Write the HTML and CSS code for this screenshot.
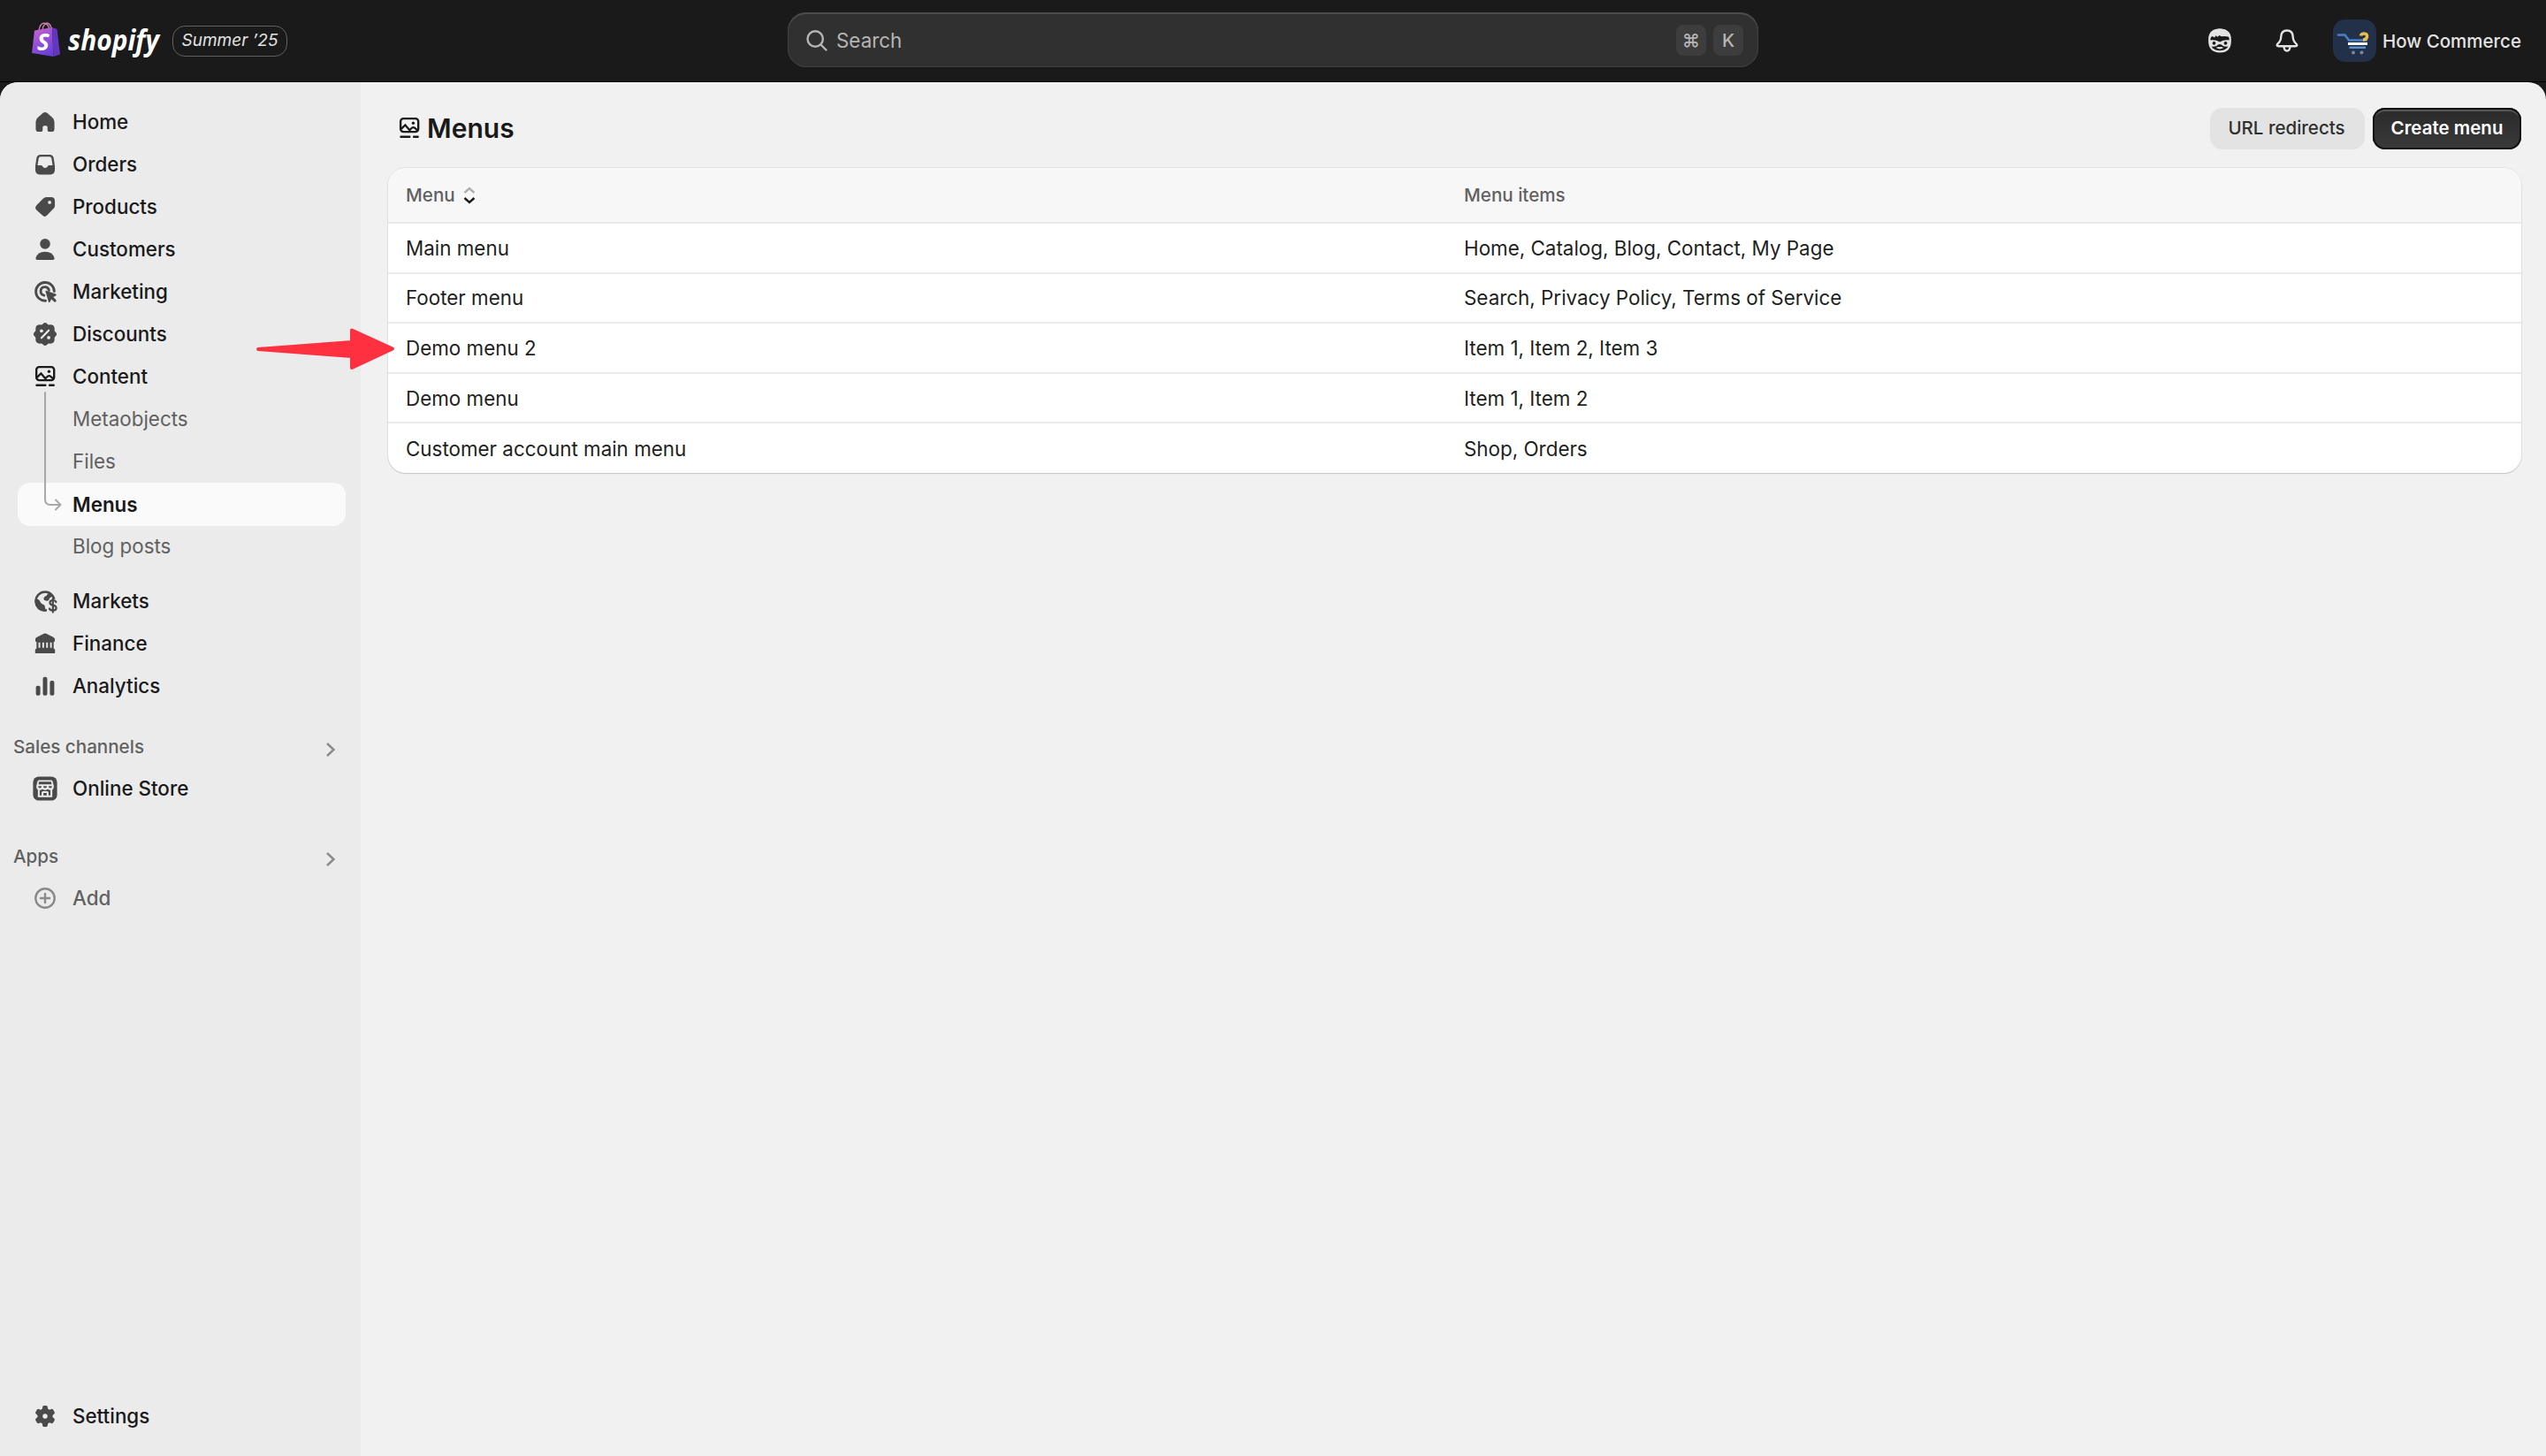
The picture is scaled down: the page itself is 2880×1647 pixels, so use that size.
FILE: index.html
```
<!DOCTYPE html>
<html lang="en">
<head>
    <meta charset="UTF-8">
    <meta name="viewport" content="width=device-width, initial-scale=1.0">
    <title>Menus</title>
    <link rel="stylesheet" href="styles.css">
</head>
<body>

<!-- Content icon is used in the sidebar and in the page title -->
<svg class="hidden" width="0" height="0">
    <symbol id="icon-content" viewBox="0 0 20 20">
        <rect x="4.200" y="3.600" width="11.800" height="8.800" rx="1.900" fill="none" stroke="currentColor" stroke-width="1.400"/>
        <path d="M4.600 10.500 7.300 7.900 10.700 11.900M10.200 11.200 11.900 9.700Q12.900 9.200 13.700 9.900L15.600 11.500" fill="none" stroke="currentColor" stroke-width="1.300"/>
        <circle cx="12.600" cy="6.600" r="1" fill="currentColor"/>
        <path d="M4.400 15.700H10.200M13 15.700H15.700" fill="none" stroke="currentColor" stroke-width="1.400" stroke-linecap="round"/>
    </symbol>
</svg>

<header class="topbar">
    <div class="brand">
        <svg class="logo" width="150" height="46" viewBox="0 0 150 46">
            <defs>
                <linearGradient id="bag" x1="0.200" y1="0" x2="0.600" y2="1">
                    <stop offset="0" stop-color="#c763d0"/>
                    <stop offset="0.500" stop-color="#9550d6"/>
                    <stop offset="1" stop-color="#6a3fd8"/>
                </linearGradient>
            </defs>
            <path d="M9 12C9.500 5 13 2.500 16 3.500S20.500 8 20.500 11M13 11C13.500 5 17 2 19.500 3.500S23 7 23 10" fill="none" stroke="#c77fa8" stroke-width="1.500"/>
            <path d="M4 11.500 24 8 25.500 41 1 37Z" fill="url(#bag)"/>
            <path d="M24 8 29.500 10 33 38.500 25.500 41Z" fill="#6236be"/>
            <text class="logo-s" x="7" y="34">S</text>
            <text class="logo-text" x="42" y="34" textLength="103" lengthAdjust="spacingAndGlyphs">shopify</text>
        </svg>
        <span class="edition">Summer ’25</span>
    </div>
    <div class="search">
        <svg class="search-icon" width="24" height="24" viewBox="0 0 24 24"><circle cx="10.200" cy="10" r="8.700"/><path d="M16.500 16.500 22.500 22.500"/></svg>
        <span class="search-label">Search</span>
        <kbd>⌘</kbd>
        <kbd>K</kbd>
    </div>
    <div class="topbar-right">
        <svg width="28" height="28" viewBox="0 0 28 28">
            <path d="M14 1.500C22.500 1.500 25.800 6 25.800 14S22.500 26.300 14 26.300 2.200 22 2.200 14 5.500 1.500 14 1.500Z" fill="none" stroke="#e3e3e3" stroke-width="2.200"/>
            <path d="M1.500 11C1.500 4 7 .5 14 .5S26.500 4 26.500 11Q22 8 16 9.300L13.500 8 11.500 9.800 9.500 8.200 8 10.500 5.500 9Q4 9.500 3.200 11.500Z" fill="#e3e3e3"/>
            <path d="M2 13.500Q9 12.300 14 15.500Q19 12.300 26 13.500V20Q19 22 15.800 18.500Q14 17.500 12.200 18.500Q9 22 2 20Z" fill="#e3e3e3"/>
            <circle cx="7.500" cy="16.800" r="1.900" fill="#1a1a1a"/>
            <circle cx="20.500" cy="16.800" r="1.900" fill="#1a1a1a"/>
            <path d="M9.800 22Q12.500 20.300 14 21.300Q15.500 20.300 18.200 22Q14 24.800 9.800 22Z" fill="#e3e3e3"/>
        </svg>
        <svg width="28" height="28" viewBox="0 0 28 28" fill="none" stroke="#e3e3e3" stroke-width="2.400" stroke-linejoin="round">
            <path d="M14 2.500C9.500 2.500 7.500 5.500 7.300 9.500C7.100 14 6 15.500 3.800 17.300C2 18.800 2.500 20.300 4.500 20.300H23.500C25.500 20.300 26 18.800 24.200 17.300C22 15.500 20.900 14 20.700 9.500C20.500 5.500 18.500 2.500 14 2.500Z"/>
            <path d="M10.500 21C10.800 24 12 25.500 14 25.500S17.200 24 17.500 21"/>
        </svg>
        <div class="store">
            <svg class="avatar" width="49" height="48" viewBox="0 0 49 48">
                <rect width="49" height="48" rx="14" fill="#22304a"/>
                <path d="M6 17.500H13.500L18 23.500H38" fill="none" stroke="#4a80c4" stroke-width="2.600" stroke-linecap="round"/>
                <path d="M17 27.500H39" stroke="#fff" stroke-width="3"/>
                <path d="M18.500 31.800H37" stroke="#5b93d6" stroke-width="2.400"/>
                <circle cx="23" cy="37.500" r="2" fill="#7b8798"/>
                <circle cx="32.500" cy="37.500" r="2" fill="#7b8798"/>
                <path d="M31.500 18.500Q32 16 35.500 16T38.500 20Q37.500 23 34 23" fill="none" stroke="#e9bd4b" stroke-width="3.600"/>
            </svg>
            <span>How Commerce</span>
        </div>
    </div>
</header>

<div class="frame">
    <aside class="sidebar">
        <nav class="nav">
            <a class="nav-item">
                <svg class="icon" viewBox="0 0 20 20"><path d="M8.600 4Q10 3 11.400 4L15 7.200Q16.200 8.300 16.200 9.800V14.500Q16.200 16.500 14.300 16.500H12.500Q11.600 16.500 11.600 15.500V13.500Q11.600 12.500 10.600 12.500H9.400Q8.400 12.500 8.400 13.500V15.500Q8.400 16.500 7.500 16.500H5.700Q3.800 16.500 3.800 14.500V9.800Q3.800 8.300 5 7.200Z"/></svg>
                Home
            </a>
            <a class="nav-item">
                <svg class="icon" viewBox="0 0 20 20"><path fill-rule="evenodd" d="M7 3.500H13Q15.300 3.500 15.700 5.800L16.500 11V13.700Q16.500 16.700 13.500 16.700H6.500Q3.500 16.700 3.500 13.700V11L4.300 5.800Q4.700 3.500 7 3.500ZM7 4.900Q5.900 4.900 5.700 6L5 10.600H7.300Q8 10.600 8.300 11.300Q8.800 12.300 10 12.300T11.700 11.300Q12 10.600 12.700 10.600H15L14.300 6Q14.100 4.900 13 4.900Z"/></svg>
                Orders
            </a>
            <a class="nav-item">
                <svg class="icon" viewBox="0 0 20 20"><path fill-rule="evenodd" d="M10.800 3.500H14Q16.500 3.500 16.500 6V9.200Q16.500 10.300 15.700 11L11.300 15.600Q9.800 17.200 8.200 15.600L4.400 12.200Q2.800 10.700 4.300 8.900L8.800 4.400Q9.600 3.500 10.800 3.500ZM13 8.100A1.100 1.100 0 1 0 13 5.900 1.100 1.100 0 1 0 13 8.100Z"/></svg>
                Products
            </a>
            <a class="nav-item">
                <svg class="icon" viewBox="0 0 20 20"><circle cx="10" cy="6.400" r="3.400"/><path d="M4.700 17Q3.500 17 3.800 15.800Q5 11.600 10 11.600T16.200 15.800Q16.500 17 15.300 17Z"/></svg>
                Customers
            </a>
            <a class="nav-item">
                <svg class="icon" viewBox="0 0 20 20"><path class="line" d="M10.300 16A6.100 6.100 0 1 1 16.100 9.700M9.300 12.400A2.800 2.800 0 1 1 12.600 9"/><path d="M10.300 9.900Q10 9.200 10.800 9.300L17.100 11.500Q17.900 12 17.200 12.600L15.500 13.500 17.300 15.500Q17.700 16.100 17.200 16.600 16.600 17.100 16.100 16.700L14.200 15 13.200 16.900Q12.700 17.500 12.300 16.800Z"/></svg>
                Marketing
            </a>
            <a class="nav-item">
                <svg class="icon" viewBox="0 0 20 20"><path d="M8.200 3.500Q10 1.100 11.800 3.500Q12.400 3.900 13.300 3.700Q16.400 3.600 16.300 6.700Q16.100 7.600 16.600 8.200Q18.900 10 16.600 11.800Q16.100 12.400 16.300 13.300Q16.400 16.400 13.300 16.300Q12.400 16.100 11.800 16.500Q10 18.900 8.200 16.500Q7.600 16.100 6.700 16.300Q3.600 16.400 3.700 13.300Q3.900 12.400 3.400 11.800Q1.100 10 3.400 8.200Q3.900 7.600 3.700 6.700Q3.600 3.600 6.700 3.700Q7.600 3.900 8.200 3.500Z"/><path class="cut" d="M7.600 12.500 12.400 7.500"/><circle class="cut-fill" cx="7.600" cy="7.800" r="1.100"/><circle class="cut-fill" cx="12.400" cy="12.300" r="1.100"/></svg>
                Discounts
            </a>
            <a class="nav-item">
                <svg class="icon icon-dark"><use href="#icon-content"/></svg>
                Content
            </a>
            <div class="subnav">
                <a class="nav-item sub">Metaobjects</a>
                <a class="nav-item sub">Files</a>
                <a class="nav-item sub active">Menus</a>
                <a class="nav-item sub">Blog posts</a>
                <svg class="branch" width="24" height="138" viewBox="0 0 24 138"><path d="M3 1V122Q3 128 9 128H20M15 122.500 20.500 128 15 133.500"/></svg>
            </div>
            <a class="nav-item after-subnav">
                <!-- globe with a dollar sign over its lower right part -->
                <svg class="icon" viewBox="0 0 20 20"><circle class="line globe" cx="10" cy="10" r="6.200"/><path class="mask" d="M12.200 8.700H19V19H10.800Z"/><path d="M4.200 8.200Q6.500 9 6.800 10.500 7.200 11.800 8.700 12.200 10.200 12.800 9.900 14.300L10.800 16.600Q4 17.500 3.200 10ZM12.700 4.100 15.400 6.400 13 8Q12.900 9.500 11.400 9.900 9.200 9.900 9 8.300 9.200 7 10.800 6.400Z"/><path class="line thin" d="M17.300 10.600Q16.800 9.400 15.200 9.400 13.200 9.400 13.200 11 13.200 12.300 15.200 12.700 17.400 13.100 17.400 14.500 17.400 16.200 15.200 16.200 13.400 16.200 12.900 15M15.200 8.200V17.400"/></svg>
                Markets
            </a>
            <a class="nav-item">
                <svg class="icon" viewBox="0 0 20 20"><path d="M9.200 3.400Q10 3 10.800 3.400L15.700 5.900Q16.500 6.300 16.500 7.200V8Q16.500 8.900 15.700 8.900V13.200Q16.600 13.400 16.600 14.300V16Q16.600 16.500 16 16.500H4Q3.400 16.500 3.400 16V14.300Q3.400 13.400 4.300 13.200V8.900Q3.500 8.900 3.500 8V7.200Q3.500 6.300 4.300 5.900Z"/><path class="cut bars" d="M6.200 9.300V12.800M8.750 9.300V12.800M11.300 9.300V12.800M13.900 9.300V12.800"/></svg>
                Finance
            </a>
            <a class="nav-item">
                <svg class="icon" viewBox="0 0 20 20"><rect x="3.900" y="9.800" width="2.900" height="6.500" rx="1.100"/><rect x="8.550" y="4" width="2.900" height="12.300" rx="1.100"/><rect x="13.200" y="6.500" width="2.900" height="9.800" rx="1.100"/></svg>
                Analytics
            </a>
        </nav>

        <div class="section">
            <div class="section-title">Sales channels <svg class="chevron" width="12" height="18" viewBox="0 0 12 18"><path d="M2 2 9.500 9 2 16"/></svg></div>
            <a class="nav-item">
                <svg class="icon" viewBox="0 0 20 20"><rect x="2" y="2" width="16" height="16" rx="3.800"/><path class="cut-fill" fill-rule="evenodd" d="M6 4.400H14Q14.800 4.400 15 5.200L15.800 8.200V9Q15.700 10.500 14.800 10.900V15.700H5.200V10.900Q4.300 10.500 4.200 9V8.200L5 5.200Q5.200 4.400 6 4.400ZM6 5.500 5.600 7.200H14.400L14 5.500ZM5.400 8.400Q5.400 9.700 6.500 9.700T7.700 8.400ZM8.800 8.400Q8.800 9.700 10 9.700T11.200 8.400ZM12.300 8.400Q12.300 9.700 13.500 9.700T14.600 8.400ZM6.400 11V14.600H7.700V12.800Q7.700 11.800 8.700 11.800H11.300Q12.300 11.800 12.300 12.800V14.600H13.600V11Q12.500 11 11.800 10.300 11 11 10 11T8.200 10.300Q7.500 11 6.400 11ZM8.900 13V14.600H11.100V13Z"/></svg>
                Online Store
            </a>
        </div>
        <div class="section apps">
            <div class="section-title">Apps <svg class="chevron" width="12" height="18" viewBox="0 0 12 18"><path d="M2 2 9.500 9 2 16"/></svg></div>
            <a class="nav-item muted">
                <svg class="icon add" viewBox="0 0 20 20"><circle cx="10" cy="10" r="6.300"/><path d="M10 7V13M7 10H13"/></svg>
                Add
            </a>
        </div>

        <a class="nav-item settings">
            <svg class="icon" viewBox="0 0 20 20"><path fill-rule="evenodd" d="M9.200 3H10.800Q11.600 3 11.700 3.900L11.900 5.200 12.900 5.800 14.200 5.300Q15 5 15.400 5.700L16.300 7.200Q16.700 8 16 8.500L15 9.400V10.600L16 11.500Q16.700 12 16.300 12.800L15.400 14.300Q15 15 14.200 14.700L12.900 14.200 11.900 14.800 11.700 16.100Q11.600 17 10.800 17H9.200Q8.400 17 8.300 16.100L8.100 14.800 7.100 14.200 5.800 14.700Q5 15 4.600 14.300L3.700 12.800Q3.300 12 4 11.500L5 10.600V9.400L4 8.500Q3.300 8 3.700 7.200L4.600 5.700Q5 5 5.800 5.300L7.100 5.800 8.100 5.200 8.300 3.900Q8.400 3 9.200 3ZM10 11.600A1.600 1.600 0 1 0 10 8.400 1.600 1.600 0 1 0 10 11.600Z"/></svg>
            Settings
        </a>
    </aside>

    <main class="content">
        <div class="page-header">
            <h1><svg class="icon"><use href="#icon-content"/></svg>Menus</h1>
            <div class="actions">
                <button class="btn">URL redirects</button>
                <button class="btn btn-primary">Create menu</button>
            </div>
        </div>
        <div class="card">
            <table>
                <thead>
                    <tr>
                        <th class="col-menu">Menu <svg class="sort" width="14" height="20" viewBox="0 0 14 20"><path class="sort-up" d="M1.500 7 7 2 12.500 7"/><path class="sort-down" d="M1.500 13 7 18 12.500 13"/></svg></th>
                        <th>Menu items</th>
                    </tr>
                </thead>
                <tbody>
                    <tr><td>Main menu</td><td>Home, Catalog, Blog, Contact, My Page</td></tr>
                    <tr><td>Footer menu</td><td>Search, Privacy Policy, Terms of Service</td></tr>
                    <tr><td>Demo menu 2</td><td>Item 1, Item 2, Item 3</td></tr>
                    <tr><td>Demo menu</td><td>Item 1, Item 2</td></tr>
                    <tr><td>Customer account main menu</td><td>Shop, Orders</td></tr>
                </tbody>
            </table>
        </div>
    </main>
</div>

<svg class="pointer" width="160" height="52" viewBox="0 0 160 52"><path d="M4 26 110 18V4.500L156 25.500 110 47V34Z"/></svg>

</body>
</html>
```

FILE: styles.css
```
* {
    box-sizing: border-box;
}
body {
    margin: 0;
    height: 1647px;
    display: flex;
    flex-direction: column;
    overflow: hidden;
    background: #1a1a1a;
    font-family: Inter, "Liberation Sans", sans-serif;
    font-size: 22.400px;
    color: #1a1a1a;
}
.hidden {
    position: absolute;
}

/* Top bar */
.topbar {
    height: 93px;
    flex: none;
    display: grid;
    grid-template-columns: 891px 1098px 1fr;
    border-bottom: 1px solid #000;
    color: #e3e3e3;
}
.brand {
    display: flex;
    align-items: center;
    padding-left: 35px;
}
.logo {
    overflow: visible;
}
.logo-s {
    font: italic bold 26px "Open Sans", sans-serif;
    fill: #fff;
}
.logo-text {
    font: italic bold 33px "Open Sans", sans-serif;
    fill: #fff;
}
.edition {
    width: 130px;
    height: 35px;
    margin: 1px 0 0 10px;
    border: 1.500px solid #616161;
    border-radius: 14px;
    font-size: 19px;
    font-style: italic;
    line-height: 32px;
    text-align: center;
    white-space: nowrap;
}
.search {
    height: 62px;
    margin-top: 14px;
    padding: 0 17px 0 21px;
    display: flex;
    align-items: center;
    gap: 8px;
    background: #303030;
    border-radius: 21px;
    box-shadow: inset 0 2px 0 #4c4c4c, inset 0 0 0 1px #424242;
    color: #b5b5b5;
}
.search-icon {
    margin-top: 2px;
    fill: none;
    stroke: #b5b5b5;
    stroke-width: 2.400;
    stroke-linecap: round;
}
.search-label {
    flex: 1;
    padding-left: 2px;
}
kbd {
    width: 34px;
    height: 35px;
    border-radius: 8px;
    background: #3d3d3d;
    font: 500 20.500px/35px Inter, "DejaVu Sans", sans-serif;
    text-align: center;
}
.topbar-right {
    display: flex;
    align-items: center;
    justify-content: flex-end;
    gap: 48px;
    padding-right: 28px;
    font-size: 20.500px;
    font-weight: 500;
}
.store {
    display: flex;
    align-items: center;
    gap: 7px;
    margin-left: -10px;
}

/* Frame */
.frame {
    flex: 1;
    display: flex;
    min-height: 0;
    background: #f1f1f1;
    border-radius: 20px 20px 0 0;
    overflow: hidden;
}
.sidebar {
    width: 408px;
    flex: none;
    display: flex;
    flex-direction: column;
    padding: 21px 17px 21px 0;
    background: #ebebeb;
}
.nav-item {
    height: 48px;
    margin-left: 20px;
    padding: 0 0 1px 14px;
    display: flex;
    align-items: center;
    gap: 14px;
    font-weight: 500;
    color: #1a1a1a;
}
.icon {
    width: 34px;
    height: 34px;
    flex: none;
    fill: #4a4a4a;
}
.icon-dark {
    color: #1a1a1a;
}
.icon .line {
    fill: none;
    stroke: #4a4a4a;
    stroke-width: 1.700;
    stroke-linecap: round;
}
.icon .thin {
    stroke-width: 1.300;
}
.icon .globe {
    stroke-width: 1.400;
}
.icon .mask {
    fill: #ebebeb;
}
.icon .cut {
    fill: none;
    stroke: #ebebeb;
    stroke-width: 1.300;
    stroke-linecap: round;
}
.icon .bars {
    stroke-width: 1.100;
    stroke-linecap: butt;
}
.icon .cut-fill {
    fill: #ebebeb;
}
.icon.add {
    fill: none;
    stroke: #8a8a8a;
    stroke-width: 1.400;
    stroke-linecap: round;
}
.subnav {
    position: relative;
}
.nav-item.sub {
    padding-left: 62px;
    font-weight: 400;
    color: #616161;
}
.nav-item.active {
    height: 49px;
    margin-bottom: -1px;
    border-radius: 14px;
    background: #fafafa;
    font-weight: 600;
    color: #1a1a1a;
}
/* runs from the Content item down to the active item */
.branch {
    position: absolute;
    left: 48px;
    top: -7px;
    fill: none;
    stroke: #a8a8a8;
    stroke-width: 2;
    stroke-linecap: round;
}
.after-subnav {
    margin-top: 14px;
}
.section {
    margin-top: 20px;
}
.section.apps {
    margin-top: 28px;
}
.section-title {
    height: 48px;
    padding: 0 11px 0 15px;
    display: flex;
    align-items: center;
    justify-content: space-between;
    font-size: 20.600px;
    font-weight: 500;
    color: #616161;
}
.chevron {
    margin-top: 7px;
    fill: none;
    stroke: #8a8a8a;
    stroke-width: 2.400;
}
.nav-item.muted {
    color: #616161;
}
.settings {
    margin-top: auto;
}

/* Page */
.content {
    flex: 1;
    padding: 28px 28px 0 31px;
}
.page-header {
    height: 69px;
    padding: 1px 0 0 7px;
    display: flex;
    align-items: flex-start;
    justify-content: space-between;
}
h1 {
    margin: 0;
    height: 46px;
    display: flex;
    align-items: center;
    gap: 3px;
    font-size: 30px;
    font-weight: 600;
}
.actions {
    display: flex;
    gap: 9px;
}
.btn {
    width: 175px;
    height: 47px;
    padding: 0 2px 2px 0;
    border: 0;
    border-radius: 14px;
    background: #e3e3e3;
    font: 500 20.500px Inter, sans-serif;
    color: #303030;
}
.btn-primary {
    width: 168px;
    padding-right: 0;
    background: linear-gradient(#2a2a2a, #3a3a3a);
    box-shadow: inset 0 0 0 2px #111, inset 0 3px 0 1px #555;
    font-weight: 600;
    color: #fff;
}
.card {
    overflow: hidden;
    border-radius: 20px;
    background: #fff;
    box-shadow: 0 1px 1px #c4c4c4, 0 0 0 1px #e3e3e3;
}
table {
    width: 100%;
    border-collapse: collapse;
    table-layout: fixed;
}
th {
    height: 62px;
    padding: 0 20px;
    background: #f7f7f7;
    font-size: 20.600px;
    font-weight: 500;
    text-align: left;
    color: #616161;
}
.col-menu {
    width: 1196px;
}
td {
    height: 56.600px;
    padding: 0 20px;
    border-top: 2px solid #ebebeb;
    color: #1f1f1f;
}
th + th, td + td {
    padding-left: 21px;
}
.sort {
    margin-left: 4px;
    vertical-align: -3px;
    fill: none;
    stroke-width: 2.400;
}
.sort-up {
    stroke: #b0b0b0;
}
.sort-down {
    stroke: #1a1a1a;
}

/* Arrow drawn over the page */
.pointer {
    position: absolute;
    left: 288px;
    top: 369px;
    fill: #ff3040;
    stroke: #ff3040;
    stroke-width: 4;
    stroke-linejoin: round;
}
```
